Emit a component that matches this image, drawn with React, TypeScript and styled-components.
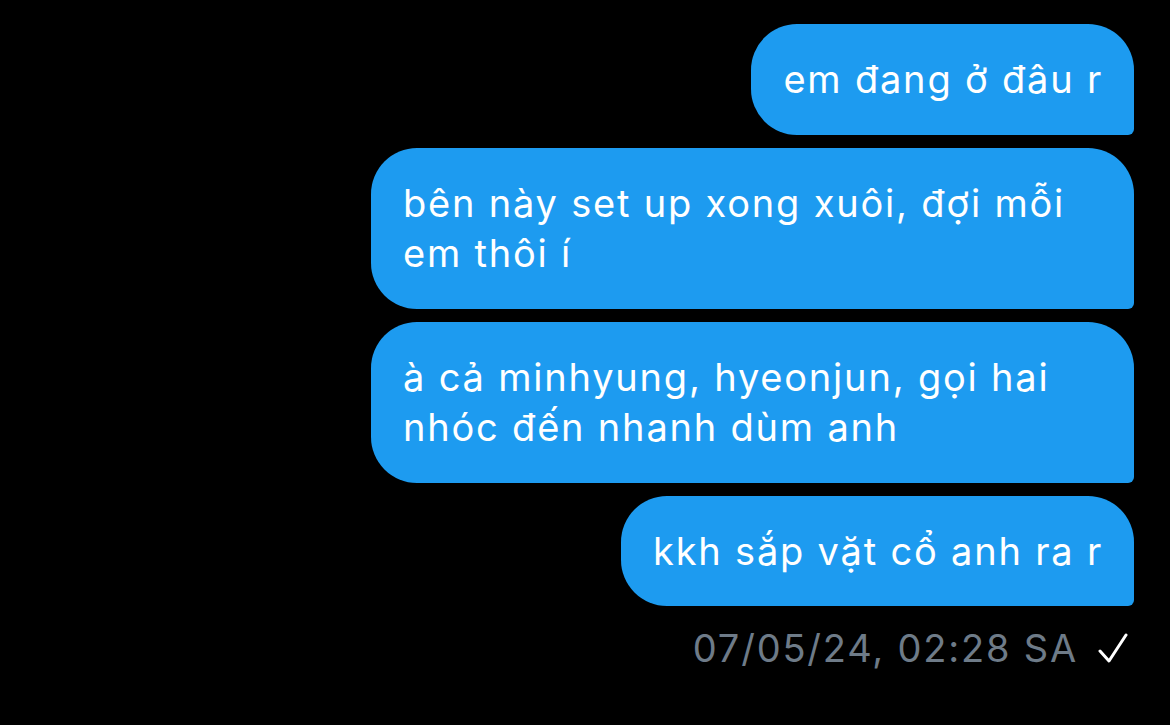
import React from "react";
import styled, { createGlobalStyle } from "styled-components";

const GlobalStyle = createGlobalStyle`
  html, body {
    margin: 0;
    padding: 0;
    background: #000;
  }
  body {
    font-family: Inter, "Noto Sans", "Liberation Sans", sans-serif;
  }
`;

const Thread = styled.div`
  display: flex;
  flex-direction: column;
  align-items: flex-end;
  gap: 13px;
  padding: 24px 36px 0 0;
  min-height: 725px;
  box-sizing: border-box;
  background: #000;
`;

const Bubble = styled.div`
  max-width: 700px;
  padding: 30px 31px 30px 32px;
  background: #1d9bf0;
  color: #fff;
  font-size: 38px;
  line-height: 50.5px;
  letter-spacing: 1.8px;
  border-radius: 46px 46px 6px 46px;
`;

const Meta = styled.div`
  display: flex;
  align-items: center;
  gap: 20px;
  margin-top: 4px;
  padding-right: 6px;
  color: #6e7b88;
  font-size: 38px;
  line-height: 50px;
  letter-spacing: 1.8px;
`;

const Check = () => (
  <svg width="30" height="32" viewBox="0 0 30 32" fill="none" stroke="#fff" strokeWidth="3" strokeLinecap="round" strokeLinejoin="round">
    <path d="M2 19l9 10L28 3" />
  </svg>
);

const messages = [
  "em đang ở đâu r",
  "bên này set up xong xuôi, đợi mỗi em thôi í",
  "à cả minhyung, hyeonjun, gọi hai nhóc đến nhanh dùm anh",
  "kkh sắp vặt cổ anh ra r",
];

const App = () => {
  return (
    <>
      <GlobalStyle />
      <Thread>
        {messages.map((m) => (
          <Bubble key={m}>{m}</Bubble>
        ))}
        <Meta>
          <span>07/05/24, 02:28 SA</span>
          <Check />
        </Meta>
      </Thread>
    </>
  );
};

export default App;
